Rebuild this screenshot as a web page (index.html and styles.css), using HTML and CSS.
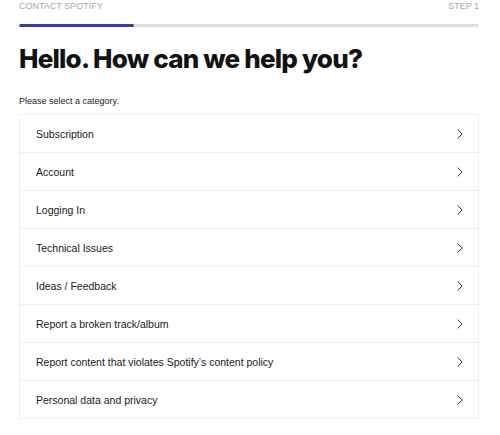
FILE: index.html
```html
<!DOCTYPE html>
<html lang="en">
<head>
<meta charset="utf-8">
<title>Contact Spotify</title>
<link rel="stylesheet" href="styles.css">
</head>
<body>
<div class="page">
  <div class="topbar">
    <span>CONTACT SPOTIFY</span>
    <span>STEP 1</span>
  </div>
  <div class="progress"><div class="progress-fill" style="width:25%"></div></div>
  <h1 class="title">Hello. How can we help you?</h1>
  <p class="hint">Please select a category.</p>
  <ul class="list">
    <li class="row"><span>Subscription</span><svg class="chev" viewBox="0 0 6 10"><path d="M0.6 0.6 L5.2 5 L0.6 9.4"/></svg></li>
    <li class="row"><span>Account</span><svg class="chev" viewBox="0 0 6 10"><path d="M0.6 0.6 L5.2 5 L0.6 9.4"/></svg></li>
    <li class="row"><span>Logging In</span><svg class="chev" viewBox="0 0 6 10"><path d="M0.6 0.6 L5.2 5 L0.6 9.4"/></svg></li>
    <li class="row"><span>Technical Issues</span><svg class="chev" viewBox="0 0 6 10"><path d="M0.6 0.6 L5.2 5 L0.6 9.4"/></svg></li>
    <li class="row"><span>Ideas / Feedback</span><svg class="chev" viewBox="0 0 6 10"><path d="M0.6 0.6 L5.2 5 L0.6 9.4"/></svg></li>
    <li class="row"><span>Report a broken track/album</span><svg class="chev" viewBox="0 0 6 10"><path d="M0.6 0.6 L5.2 5 L0.6 9.4"/></svg></li>
    <li class="row"><span>Report content that violates Spotify’s content policy</span><svg class="chev" viewBox="0 0 6 10"><path d="M0.6 0.6 L5.2 5 L0.6 9.4"/></svg></li>
    <li class="row"><span>Personal data and privacy</span><svg class="chev" viewBox="0 0 6 10"><path d="M0.6 0.6 L5.2 5 L0.6 9.4"/></svg></li>
  </ul>
</div>
</body>
</html>
```
FILE: styles.css
```css
html, body {
  margin: 0;
  padding: 0;
  background: #fff;
}
body {
  font-family: "Liberation Sans", Arial, sans-serif;
  color: #191919;
}
.page {
  width: 460px;
  padding: 0 21px 0 19px;
}
.topbar {
  display: flex;
  justify-content: space-between;
  font-size: 9px;
  line-height: 12px;
  color: #a9a9a9;
  padding-top: 0;
}
.progress {
  margin-top: 12px;
  height: 3px;
  border-radius: 2px;
  background: #dddddd;
  overflow: hidden;
}
.progress-fill {
  height: 100%;
  background: #2f409e;
  border-radius: 2px;
}
.title {
  font-family: Inter, "Liberation Sans", sans-serif;
  font-weight: 800;
  font-size: 26px;
  letter-spacing: -0.8px;
  line-height: 32px;
  margin: 16px 0 0 0;
  color: #121212;
}
.hint {
  font-size: 9px;
  line-height: 12px;
  margin: 20px 0 0 0;
  color: #222;
}
.list {
  list-style: none;
  margin: 7px 0 0 0;
  padding: 0;
  border: 1px solid #efefef;
}
.row {
  display: flex;
  justify-content: space-between;
  align-items: center;
  height: 37px;
  padding: 0 15px 0 16px;
  font-size: 10.5px;
  color: #1a1a1a;
}
.row + .row {
  border-top: 1px solid #efefef;
}
.chev {
  width: 6px;
  height: 10px;
  fill: none;
  stroke: #333;
  stroke-width: 1;
}
```
